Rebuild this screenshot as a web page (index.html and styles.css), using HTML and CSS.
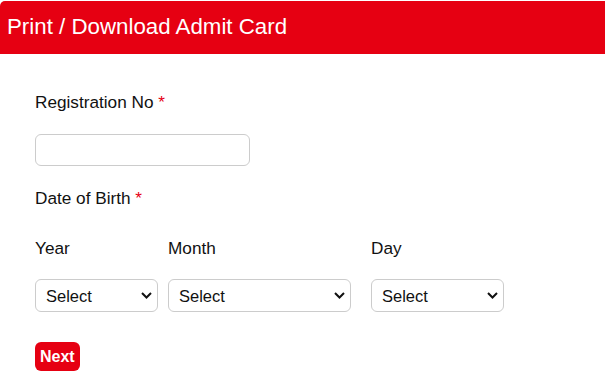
FILE: index.html
```html
<!DOCTYPE html>
<html lang="en">
<head>
	<meta charset="UTF-8">
	<title>Print / Download Admit Card</title>
	<link rel="stylesheet" href="styles.css">
</head>
<body>
	<div class="panel">
		<div class="panel-heading">Print / Download Admit Card</div>
		<form class="panel-body">
			<div class="reg-group">
				<label class="field-label" for="regno">Registration No <span class="req">*</span></label>
				<input type="text" id="regno" class="text-input">
			</div>
			<div class="field-label dob-label">Date of Birth <span class="req">*</span></div>
			<div class="dob-row">
				<div class="dob-col col-year">
					<label class="field-label" for="year">Year</label>
					<span class="sel-wrap sel-year">
						<select id="year" class="sel"><option>Select</option></select>
						<svg class="chev" width="11" height="7" viewBox="0 0 11 7"><polyline points="1,1 5.5,5.5 10,1" fill="none" stroke="#111" stroke-width="2"/></svg>
					</span>
				</div>
				<div class="dob-col col-month">
					<label class="field-label" for="month">Month</label>
					<span class="sel-wrap sel-month">
						<select id="month" class="sel"><option>Select</option></select>
						<svg class="chev" width="11" height="7" viewBox="0 0 11 7"><polyline points="1,1 5.5,5.5 10,1" fill="none" stroke="#111" stroke-width="2"/></svg>
					</span>
				</div>
				<div class="dob-col col-day">
					<label class="field-label" for="day">Day</label>
					<span class="sel-wrap sel-day">
						<select id="day" class="sel"><option>Select</option></select>
						<svg class="chev" width="11" height="7" viewBox="0 0 11 7"><polyline points="1,1 5.5,5.5 10,1" fill="none" stroke="#111" stroke-width="2"/></svg>
					</span>
				</div>
			</div>
			<button type="button" class="btn-next">Next</button>
		</form>
	</div>
</body>
</html>
```

FILE: styles.css
```css
*{
	margin: 0;
	padding: 0;
	box-sizing: border-box;
}
body{
	font-family: "Liberation Sans", Arial, sans-serif;
	color: #111;
	background: #fff;
	overflow: hidden;
}
.panel{
	padding-top: 1px;
}
.panel-heading{
	background: #e60012;
	color: #fff;
	height: 53px;
	line-height: 52px;
	padding-left: 7px;
	font-size: 22.3px;
	border-top-left-radius: 5px;
}
.panel-body{
	padding: 38px 35px 0;
}
.field-label{
	display: block;
	font-size: 17.2px;
	line-height: 20px;
}
.req{
	color: #e60012;
}
.text-input{
	display: block;
	margin-top: 22px;
	width: 215px;
	height: 32px;
	border: 1px solid #ccc;
	border-radius: 6px;
	font-size: 16px;
	padding: 0 10px;
}
.dob-label{
	margin-top: 22px;
}
.dob-row{
	display: flex;
	margin-top: 30px;
}
.col-year{
	width: 133px;
}
.col-month{
	width: 203px;
}
.sel-wrap{
	display: block;
	position: relative;
	margin-top: 21px;
	height: 33px;
}
.sel-year{
	width: 123px;
}
.sel-month{
	width: 183px;
}
.sel-day{
	width: 133px;
}
.sel{
	display: block;
	width: 100%;
	height: 33px;
	border: 1px solid #ccc;
	border-radius: 6px;
	background: #fff;
	font-family: "Liberation Sans", Arial, sans-serif;
	font-size: 16.5px;
	color: #111;
	padding: 0 10px;
	appearance: none;
	-webkit-appearance: none;
}
.chev{
	position: absolute;
	right: 6px;
	top: 13px;
	pointer-events: none;
}
.btn-next{
	display: block;
	margin-top: 30px;
	height: 29px;
	padding: 0 5px;
	background: #e60012;
	color: #fff;
	border: none;
	border-radius: 6px;
	font-family: "Liberation Sans", Arial, sans-serif;
	font-size: 16px;
	font-weight: bold;
}
```
